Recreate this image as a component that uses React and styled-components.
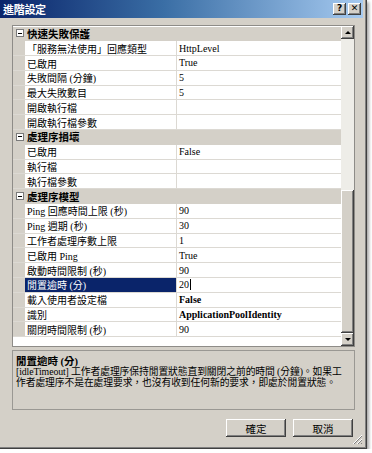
import React from 'react';
import styled, { createGlobalStyle } from 'styled-components';

const FONT = `"Liberation Serif", "Noto Sans CJK TC", serif`;
const LINE = '#dcd9d3';
const FACE = '#d4d0c8';

const GlobalStyle = createGlobalStyle`
  html, body { margin: 0; padding: 0; background: #ffffff; }
  body { font-family: ${FONT}; font-size: 10px; color: #000; }
  * { box-sizing: border-box; }
`;

const Window = styled.div`
  position: relative;
  width: 367px;
  height: 449px;
  background: ${FACE};
  border-right: 1px solid #404040;
  border-bottom: 1px solid #404040;
  box-shadow: inset -1px -1px 0 #808080, 2px 2px 3px rgba(0, 0, 0, 0.35);
  display: flex;
  flex-direction: column;
`;

const TitleBar = styled.div`
  height: 18px;
  width: 363px;
  background: linear-gradient(to right, #0a246a 0%, #3a6ea5 45%, #a6caf0 100%);
  display: flex;
  align-items: center;
  justify-content: space-between;
  padding: 0 2px 0 3px;
`;

const Title = styled.span`
  color: #fff;
  font-weight: bold;
  font-size: 11px;
  font-family: "Noto Sans CJK TC", sans-serif;
  letter-spacing: -0.3px;
`;

const TitleButtons = styled.div`
  display: flex;
  gap: 2px;
`;

const raised = `
  background: ${FACE};
  box-shadow: inset -1px -1px 0 #404040, inset 1px 1px 0 #ffffff, inset -2px -2px 0 #808080;
`;

const CaptionButton = styled.div`
  ${raised}
  width: 13px;
  height: 12px;
  display: flex;
  align-items: center;
  justify-content: center;
  font-family: "DejaVu Sans", sans-serif;
  font-weight: bold;
  font-size: 9px;
  line-height: 1;
  padding-bottom: 1px;
`;

const Body = styled.div`
  padding: 7px 0 0 12px;
  display: flex;
  flex-direction: column;
`;

const Grid = styled.div`
  width: 343px;
  height: 322px;
  border: 1px solid #8e8c88;
  display: flex;
  background: #fff;
`;

const Rows = styled.div`
  flex: 1;
  display: flex;
  flex-direction: column;
  padding-top: 0.5px;
`;

const Row = styled.div`
  height: 14.8px;
  display: flex;
  background: ${p => (p.$category ? FACE : '#fff')};
  border-bottom: 1px solid ${p => (p.$category ? FACE : LINE)};
`;

const Gutter = styled.div`
  width: 12px;
  background: ${FACE};
  display: flex;
  align-items: center;
  justify-content: center;
  padding-left: 2px;
`;

const Expander = styled.div`
  width: 8px;
  height: 8px;
  border: 1px solid #7a7a7a;
  background: #fff;
  display: flex;
  align-items: center;
  justify-content: center;
  &::after {
    content: '';
    width: 4px;
    height: 1px;
    background: #000;
  }
`;

const CategoryText = styled.div`
  padding-left: 2px;
  display: flex;
  align-items: center;
  font-weight: bold;
  font-size: 10.5px;
`;

const Label = styled.div`
  width: 152px;
  border-right: 1px solid ${LINE};
  padding-left: 2px;
  display: flex;
  align-items: center;
  white-space: nowrap;
  background: ${p => (p.$selected ? '#0a246a' : '#fff')};
  color: ${p => (p.$selected ? '#fff' : '#000')};
`;

const Value = styled.div`
  flex: 1;
  padding-left: 2px;
  display: flex;
  align-items: center;
  white-space: nowrap;
  font-weight: ${p => (p.$bold ? 'bold' : 'normal')};
`;

const Caret = styled.span`
  display: inline-block;
  width: 1px;
  height: 11px;
  background: #000;
  margin-left: 1px;
`;

const Scrollbar = styled.div`
  width: 13px;
  display: flex;
  flex-direction: column;
`;

const ArrowButton = styled.div`
  ${raised}
  width: 13px;
  height: 13px;
  display: flex;
  align-items: center;
  justify-content: center;
  &::after {
    content: '';
    width: 0;
    height: 0;
    border-left: 3px solid transparent;
    border-right: 3px solid transparent;
    ${p => (p.$down ? 'border-top: 3px solid #000;' : 'border-bottom: 3px solid #000;')}
  }
`;

const Track = styled.div`
  flex: 1;
  background: #eeede8;
  display: flex;
  flex-direction: column;
  justify-content: flex-end;
`;

const Thumb = styled.div`
  ${raised}
  height: 143px;
`;

const Description = styled.div`
  width: 343px;
  height: 60px;
  margin-top: 3px;
  border: 1px solid #9a9893;
  padding: 2px 3px;
`;

const DescTitle = styled.div`
  font-weight: bold;
  font-size: 10.5px;
  height: 14px;
  display: flex;
  align-items: center;
`;

const DescLine = styled.div`
  white-space: nowrap;
  line-height: 10.5px;
  font-size: 9.8px;
  letter-spacing: -0.1px;
`;

const ButtonRow = styled.div`
  width: 343px;
  margin-top: 9px;
  padding-right: 2px;
  display: flex;
  justify-content: flex-end;
  gap: 7px;
`;

const Button = styled.div`
  ${raised}
  width: 60px;
  height: 18px;
  display: flex;
  align-items: center;
  justify-content: center;
  font-size: 10.5px;
`;

const Grip = styled.svg`
  position: absolute;
  right: 3px;
  bottom: 3px;
`;

const sections = [
  {
    name: '快速失敗保護',
    items: [
      ['「服務無法使用」回應類型', 'HttpLevel'],
      ['已啟用', 'True'],
      ['失敗間隔 (分鐘)', '5'],
      ['最大失敗數目', '5'],
      ['開啟執行檔', ''],
      ['開啟執行檔參數', ''],
    ],
  },
  {
    name: '處理序損壞',
    items: [
      ['已啟用', 'False'],
      ['執行檔', ''],
      ['執行檔參數', ''],
    ],
  },
  {
    name: '處理序模型',
    items: [
      ['Ping 回應時間上限 (秒)', '90'],
      ['Ping 週期 (秒)', '30'],
      ['工作者處理序數上限', '1'],
      ['已啟用 Ping', 'True'],
      ['啟動時間限制 (秒)', '90'],
      ['閒置逾時 (分)', '20', { selected: true }],
      ['載入使用者設定檔', 'False', { bold: true }],
      ['識別', 'ApplicationPoolIdentity', { bold: true }],
      ['關閉時間限制 (秒)', '90'],
    ],
  },
];

export default function App() {
  return (
    <>
      <GlobalStyle />
      <Window>
        <TitleBar>
          <Title>進階設定</Title>
          <TitleButtons>
            <CaptionButton>?</CaptionButton>
            <CaptionButton>✕</CaptionButton>
          </TitleButtons>
        </TitleBar>
        <Body>
          <Grid>
            <Rows>
              {sections.map(section => (
                <React.Fragment key={section.name}>
                  <Row $category>
                    <Gutter><Expander /></Gutter>
                    <CategoryText>{section.name}</CategoryText>
                  </Row>
                  {section.items.map(([label, value, opts = {}]) => (
                    <Row key={section.name + label}>
                      <Gutter />
                      <Label $selected={opts.selected}>{label}</Label>
                      <Value $bold={opts.bold}>
                        {value}
                        {opts.selected && <Caret />}
                      </Value>
                    </Row>
                  ))}
                </React.Fragment>
              ))}
            </Rows>
            <Scrollbar>
              <ArrowButton />
              <Track><Thumb /></Track>
              <ArrowButton $down />
            </Scrollbar>
          </Grid>
          <Description>
            <DescTitle>閒置逾時 (分)</DescTitle>
            <DescLine>[idleTimeout] 工作者處理序保持閒置狀態直到關閉之前的時間 (分鐘)。如果工</DescLine>
            <DescLine>作者處理序不是在處理要求，也沒有收到任何新的要求，即處於閒置狀態。</DescLine>
          </Description>
          <ButtonRow>
            <Button>確定</Button>
            <Button>取消</Button>
          </ButtonRow>
        </Body>
        <Grip width="11" height="11" viewBox="0 0 11 11">
          <g strokeWidth="1">
            <line x1="10" y1="1" x2="1" y2="10" stroke="#fff" />
            <line x1="10" y1="2" x2="2" y2="10" stroke="#808080" />
            <line x1="10" y1="5" x2="5" y2="10" stroke="#fff" />
            <line x1="10" y1="6" x2="6" y2="10" stroke="#808080" />
            <line x1="10" y1="9" x2="9" y2="10" stroke="#808080" />
          </g>
        </Grip>
      </Window>
    </>
  );
}
